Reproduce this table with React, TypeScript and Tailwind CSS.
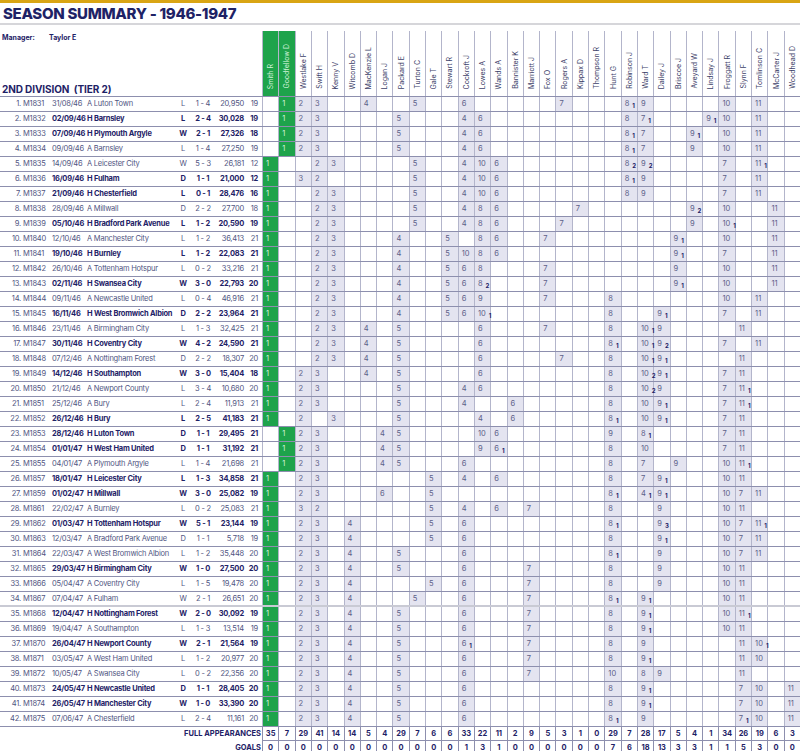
import React from 'react';

const PLAYERS = [
  'Smith R', 'Goodfellow D', 'Westlake F', 'Swift H', 'Kenny V', 'Witcomb D', 'MacKenzie L', 'Logan J',
  'Packard E', 'Turton C', 'Gale T', 'Stewart R', 'Cockroft J', 'Lowes A', 'Wands A', 'Bannister K',
  'Marriott J', 'Fox O', 'Rogers A', 'Kippax D', 'Thompson R', 'Hunt G', 'Robinson J', 'Ward T',
  'Dailey J', 'Briscoe J', 'Aveyard W', 'Lindsay J', 'Froggatt R', 'Slynn F', 'Tomlinson C', 'McCarter J',
  'Woodhead D',
];

const APPS = [35, 7, 29, 41, 14, 14, 5, 4, 29, 7, 6, 6, 33, 22, 11, 2, 9, 5, 3, 1, 0, 29, 7, 28, 17, 5, 4, 1, 34, 26, 19, 6, 3];
const GOALS = [0, 0, 0, 0, 0, 0, 0, 0, 0, 0, 0, 0, 1, 3, 1, 0, 0, 0, 0, 0, 0, 7, 6, 18, 13, 3, 3, 1, 1, 5, 3, 0, 0];

type Match = {
  id: string;
  date: string;
  venue: 'H' | 'A';
  opp: string;
  res: string;
  score: string;
  att: string;
  pos: number;
  cells: string; // "col:shirt.goals"
};

const MATCHES: Match[] = [
  { id: 'M1831', date: '31/08/46', venue: 'A', opp: 'Luton Town', res: 'L', score: '1 - 4', att: '20,950', pos: 19, cells: '1:1 2:2 3:3 6:4 9:5 12:6 18:7 22:8.1 23:9 28:10 30:11' },
  { id: 'M1832', date: '02/09/46', venue: 'H', opp: 'Barnsley', res: 'L', score: '2 - 4', att: '30,028', pos: 19, cells: '1:1 2:2 3:3 8:5 12:4 13:6 22:8 23:7.1 27:9.1 28:10 30:11' },
  { id: 'M1833', date: '07/09/46', venue: 'H', opp: 'Plymouth Argyle', res: 'W', score: '2 - 1', att: '27,326', pos: 18, cells: '1:1 2:2 3:3 8:5 12:4 13:6 22:8.1 23:7 26:9.1 28:10 30:11' },
  { id: 'M1834', date: '09/09/46', venue: 'A', opp: 'Barnsley', res: 'L', score: '1 - 4', att: '27,250', pos: 19, cells: '1:1 2:2 3:3 8:5 12:4 13:6 22:8.1 23:7 26:9 28:10 30:11' },
  { id: 'M1835', date: '14/09/46', venue: 'A', opp: 'Leicester City', res: 'W', score: '5 - 3', att: '26,181', pos: 12, cells: '0:1 3:2 4:3 9:5 12:4 13:10 14:6 22:8.2 23:9.2 28:7 30:11.1' },
  { id: 'M1836', date: '16/09/46', venue: 'H', opp: 'Fulham', res: 'D', score: '1 - 1', att: '21,000', pos: 12, cells: '0:1 2:3 3:2 9:5 12:4 13:10 14:6 22:8.1 23:9 28:7 30:11' },
  { id: 'M1837', date: '21/09/46', venue: 'H', opp: 'Chesterfield', res: 'L', score: '0 - 1', att: '28,476', pos: 16, cells: '0:1 3:2 4:3 9:5 12:4 13:10 14:6 22:8 23:9 28:7 30:11' },
  { id: 'M1838', date: '28/09/46', venue: 'A', opp: 'Millwall', res: 'D', score: '2 - 2', att: '27,700', pos: 18, cells: '0:1 3:2 4:3 9:5 12:4 13:8 14:6 19:7 26:9.2 28:10 31:11' },
  { id: 'M1839', date: '05/10/46', venue: 'H', opp: 'Bradford Park Avenue', res: 'L', score: '1 - 2', att: '20,590', pos: 19, cells: '0:1 3:2 4:3 9:5 12:4 13:8 14:6 18:7 26:9 28:10.1 31:11' },
  { id: 'M1840', date: '12/10/46', venue: 'A', opp: 'Manchester City', res: 'L', score: '1 - 2', att: '36,413', pos: 21, cells: '0:1 3:2 4:3 8:4 11:5 13:8 14:6 17:7 25:9.1 28:10 31:11' },
  { id: 'M1841', date: '19/10/46', venue: 'H', opp: 'Burnley', res: 'L', score: '1 - 2', att: '22,083', pos: 21, cells: '0:1 3:2 4:3 8:4 11:5 12:10 13:8 14:6 25:9.1 28:7 31:11' },
  { id: 'M1842', date: '26/10/46', venue: 'A', opp: 'Tottenham Hotspur', res: 'L', score: '0 - 2', att: '33,216', pos: 21, cells: '0:1 3:2 4:3 8:4 11:5 12:6 13:8 17:7 25:9 28:10 31:11' },
  { id: 'M1843', date: '02/11/46', venue: 'H', opp: 'Swansea City', res: 'W', score: '3 - 0', att: '22,793', pos: 20, cells: '0:1 3:2 4:3 8:4 11:5 12:6 13:8.2 17:7 25:9.1 28:10 31:11' },
  { id: 'M1844', date: '09/11/46', venue: 'A', opp: 'Newcastle United', res: 'L', score: '0 - 4', att: '46,916', pos: 21, cells: '0:1 3:2 4:3 8:4 11:5 12:6 13:9 17:7 21:8 28:10 30:11' },
  { id: 'M1845', date: '16/11/46', venue: 'H', opp: 'West Bromwich Albion', res: 'D', score: '2 - 2', att: '23,964', pos: 21, cells: '0:1 3:2 4:3 8:4 11:5 12:6 13:10.1 21:8 24:9.1 28:7 30:11' },
  { id: 'M1846', date: '23/11/46', venue: 'A', opp: 'Birmingham City', res: 'L', score: '1 - 3', att: '32,425', pos: 21, cells: '0:1 3:2 4:3 6:4 8:5 13:6 17:7 21:8 23:10.1 24:9 29:11' },
  { id: 'M1847', date: '30/11/46', venue: 'H', opp: 'Coventry City', res: 'W', score: '4 - 2', att: '24,590', pos: 21, cells: '0:1 3:2 4:3 6:4 8:5 13:6 21:8.1 23:10.1 24:9.2 28:7 30:11' },
  { id: 'M1848', date: '07/12/46', venue: 'A', opp: 'Nottingham Forest', res: 'D', score: '2 - 2', att: '18,307', pos: 20, cells: '0:1 3:2 4:3 6:4 8:5 13:6 18:7 21:8 23:10.1 24:9.1 29:11' },
  { id: 'M1849', date: '14/12/46', venue: 'H', opp: 'Southampton', res: 'W', score: '3 - 0', att: '15,404', pos: 18, cells: '0:1 2:2 3:3 6:4 8:5 13:6 21:8 23:10.2 24:9.1 28:7 29:11' },
  { id: 'M1850', date: '21/12/46', venue: 'A', opp: 'Newport County', res: 'L', score: '3 - 4', att: '10,680', pos: 20, cells: '0:1 2:2 3:3 8:5 12:4 13:6 21:8 23:10.2 24:9 28:7 29:11.1' },
  { id: 'M1851', date: '25/12/46', venue: 'A', opp: 'Bury', res: 'L', score: '2 - 4', att: '11,913', pos: 21, cells: '0:1 2:2 3:3 8:5 12:4 15:6 21:8 23:10 24:9.1 28:7 29:11.1' },
  { id: 'M1852', date: '26/12/46', venue: 'H', opp: 'Bury', res: 'L', score: '2 - 5', att: '41,183', pos: 21, cells: '0:1 2:2 4:3 8:5 13:4 15:6 21:8.1 23:10 24:9.1 28:7 29:11' },
  { id: 'M1853', date: '28/12/46', venue: 'H', opp: 'Luton Town', res: 'D', score: '1 - 1', att: '29,495', pos: 21, cells: '1:1 2:2 3:3 7:4 8:5 13:10 14:6 21:9 23:8.1 28:7 29:11' },
  { id: 'M1854', date: '01/01/47', venue: 'H', opp: 'West Ham United', res: 'D', score: '1 - 1', att: '31,192', pos: 21, cells: '1:1 2:2 3:3 7:4 8:5 13:9 14:6.1 21:8 23:10 28:7 29:11' },
  { id: 'M1855', date: '04/01/47', venue: 'A', opp: 'Plymouth Argyle', res: 'L', score: '1 - 4', att: '21,698', pos: 21, cells: '1:1 2:2 3:3 7:4 8:5 12:6 21:8 23:7 25:9 28:10 29:11.1' },
  { id: 'M1857', date: '18/01/47', venue: 'H', opp: 'Leicester City', res: 'L', score: '1 - 3', att: '34,858', pos: 21, cells: '0:1 2:2 3:3 10:5 12:4 14:6 21:8 23:7 24:9.1 28:10 29:11' },
  { id: 'M1859', date: '01/02/47', venue: 'H', opp: 'Millwall', res: 'W', score: '3 - 0', att: '25,082', pos: 19, cells: '0:1 2:2 3:3 7:6 10:5 21:8.1 23:4.1 24:9.1 28:10 29:7 30:11' },
  { id: 'M1861', date: '22/02/47', venue: 'A', opp: 'Burnley', res: 'L', score: '0 - 2', att: '25,083', pos: 21, cells: '0:1 2:3 3:2 10:5 12:4 14:6 16:7 21:8 24:9 28:10 29:11' },
  { id: 'M1862', date: '01/03/47', venue: 'H', opp: 'Tottenham Hotspur', res: 'W', score: '5 - 1', att: '23,144', pos: 19, cells: '0:1 2:2 3:3 5:4 10:5 12:6 21:8.1 24:9.3 28:10 29:7 30:11.1' },
  { id: 'M1863', date: '12/03/47', venue: 'A', opp: 'Bradford Park Avenue', res: 'D', score: '1 - 1', att: '5,718', pos: 19, cells: '0:1 2:2 3:3 5:4 10:5 12:6 21:8 24:9.1 28:10 29:7 30:11' },
  { id: 'M1864', date: '22/03/47', venue: 'A', opp: 'West Bromwich Albion', res: 'L', score: '1 - 2', att: '35,448', pos: 20, cells: '0:1 2:2 3:3 5:4 8:5 12:6 21:8.1 24:9 28:10 29:7 30:11' },
  { id: 'M1865', date: '29/03/47', venue: 'H', opp: 'Birmingham City', res: 'W', score: '1 - 0', att: '27,500', pos: 20, cells: '0:1 2:2 3:3 5:4 8:5 12:6 16:7 21:8 24:9 28:10 29:11' },
  { id: 'M1866', date: '05/04/47', venue: 'A', opp: 'Coventry City', res: 'L', score: '1 - 5', att: '19,478', pos: 20, cells: '0:1 2:2 3:3 5:4 10:5 12:6 16:7 21:8 24:9 28:10 29:11' },
  { id: 'M1867', date: '07/04/47', venue: 'A', opp: 'Fulham', res: 'W', score: '2 - 1', att: '26,651', pos: 20, cells: '0:1 2:2 3:3 5:4 9:5 12:6 16:7 21:8.1 23:9.1 28:10 29:11' },
  { id: 'M1868', date: '12/04/47', venue: 'H', opp: 'Nottingham Forest', res: 'W', score: '2 - 0', att: '30,092', pos: 19, cells: '0:1 2:2 3:3 5:4 8:5 12:6 16:7 21:8 23:9.1 28:10 29:11.1' },
  { id: 'M1869', date: '19/04/47', venue: 'A', opp: 'Southampton', res: 'L', score: '1 - 3', att: '13,514', pos: 19, cells: '0:1 2:2 3:3 5:4 8:5 12:6 16:7 21:8 23:9.1 28:10 29:11' },
  { id: 'M1870', date: '26/04/47', venue: 'H', opp: 'Newport County', res: 'W', score: '2 - 1', att: '21,564', pos: 19, cells: '0:1 2:2 3:3 5:4 8:5 12:6.1 16:7 21:8 23:9 29:11 30:10.1' },
  { id: 'M1871', date: '03/05/47', venue: 'A', opp: 'West Ham United', res: 'L', score: '1 - 2', att: '20,977', pos: 20, cells: '0:1 2:2 3:3 5:4 8:5 12:6 16:7 21:8 23:9.1 29:11 30:10' },
  { id: 'M1872', date: '10/05/47', venue: 'A', opp: 'Swansea City', res: 'L', score: '0 - 2', att: '22,356', pos: 20, cells: '0:1 2:2 3:3 5:4 8:5 12:6 16:7 21:10 23:8 24:9 29:11' },
  { id: 'M1873', date: '24/05/47', venue: 'H', opp: 'Newcastle United', res: 'D', score: '1 - 1', att: '28,405', pos: 20, cells: '0:1 2:2 3:3 5:4 8:5 12:6 21:8 23:9.1 29:7 30:10 32:11' },
  { id: 'M1874', date: '26/05/47', venue: 'H', opp: 'Manchester City', res: 'W', score: '1 - 0', att: '33,390', pos: 20, cells: '0:1 2:2 3:3 5:4 8:5 12:6 21:8 23:9.1 29:7 30:10 32:11' },
  { id: 'M1875', date: '07/06/47', venue: 'A', opp: 'Chesterfield', res: 'L', score: '2 - 4', att: '11,161', pos: 20, cells: '0:1 2:2 3:3 5:4 8:5 12:6 21:8.1 23:9 29:7.1 30:10 32:11' },
];

const parseCells = (s: string) => {
  const map: Record<number, { n: string; g?: string }> = {};
  s.split(' ').forEach(t => {
    const [c, v] = t.split(':');
    const [n, g] = v.split('.');
    map[Number(c)] = { n, g };
  });
  return map;
};

const MatchRow: React.FC<{ m: Match; idx: number }> = ({ m, idx }) => {
  const bold = m.venue === 'H';
  const cells = parseCells(m.cells);
  return (
    <div
      className={`grid grid-cols-[262px_repeat(33,minmax(0,1fr))] h-[15px] ${
        idx === 33 ? 'border-b-2 border-[#c9cad4]' : 'border-b border-[#8d8fae]'
      }`}
    >
      <div className={`flex items-center text-[7.5px] leading-none whitespace-nowrap tracking-[-0.03em] ${bold ? 'font-bold text-[#1e2266]' : 'text-[#50557f]'}`}>
        <span className="w-[21px] text-right font-normal text-[#50557f]">{idx + 1}.</span>
        <span className="w-[31px] pl-[2px] font-normal text-[#50557f]">{m.id}</span>
        <span className="w-[35px]">{m.date}</span>
        <span className="w-[89px]">{m.venue} {m.opp}</span>
        <span className="w-[14px] text-center">{m.res}</span>
        <span className="w-[26px] text-center">{m.score}</span>
        <span className="w-[28px] text-right">{m.att}</span>
        <span className="w-[14px] text-right">{m.pos}</span>
      </div>
      {PLAYERS.map((_, c) => {
        const cell = cells[c];
        const green = c < 2 && !!cell;
        return (
          <div
            key={c}
            className={`border-l border-[#b3b5cb] flex items-center pl-[3px] text-[7.5px] leading-none ${
              green ? 'bg-[#1ea34b] text-[#d2f2da]' : cell ? 'bg-[#e4e4f0] text-[#5c6088]' : ''
            }`}
          >
            {cell && (
              <>
                <span>{cell.n}</span>
                {cell.g && <span className="relative top-[2px] ml-[3px] text-[6px] font-bold text-[#1e2266]">{cell.g}</span>}
              </>
            )}
          </div>
        );
      })}
    </div>
  );
};

const TotalsRow: React.FC<{ label: string; values: number[] }> = ({ label, values }) => (
  <div className="grid grid-cols-[262px_repeat(33,minmax(0,1fr))] h-[14px]">
    <div className="flex items-center justify-end pr-[1px] text-[7.5px] font-bold text-[#1e2266] leading-none">{label}</div>
    {values.map((v, i) => (
      <div
        key={i}
        className="border-l border-b border-[#8d8fae] flex items-center justify-center text-[7.5px] font-bold text-[#1e2266] leading-none"
      >
        {v}
      </div>
    ))}
  </div>
);

export default function App() {
  return (
    <div className="w-[800px] h-[751px] overflow-hidden bg-white font-['Inter',sans-serif]">
      {/* Title */}
      <div className="h-[3px] bg-[#d9a514]" />
      <div className="h-[20px] pl-[3px] flex items-center text-[15px] font-extrabold tracking-[-0.02em] text-[#1e2266] leading-none">
        SEASON SUMMARY - 1946-1947
      </div>
      <div className="h-[2px] bg-[#d6d6da]" />

      {/* Column headers */}
      <div className="grid grid-cols-[262px_repeat(33,minmax(0,1fr))] h-[66px] mt-[6px] border-b border-[#8d8fae]">
        <div className="flex flex-col justify-between pl-[2px]">
          <div className="flex pt-[3px] text-[7px] font-bold text-[#1e2266] leading-none">
            <span className="w-[47px]">Manager:</span>
            <span>Taylor E</span>
          </div>
          <div className="pb-[2px] text-[10px] font-bold text-[#1e2266] leading-none whitespace-pre tracking-[-0.01em]">
            2ND DIVISION  (TIER 2)
          </div>
        </div>
        {PLAYERS.map((p, c) => (
          <div
            key={p}
            className={`border-l border-[#b3b5cb] flex justify-center items-end pb-[7px] ${
              c < 2 ? 'bg-[#1ea34b] text-[#d2f2da]' : 'text-[#3d4169]'
            }`}
          >
            <span className="[writing-mode:vertical-rl] rotate-180 text-[7px] leading-none whitespace-nowrap">{p}</span>
          </div>
        ))}
      </div>

      {MATCHES.map((m, i) => (
        <MatchRow key={m.id} m={m} idx={i} />
      ))}

      <TotalsRow label="FULL APPEARANCES" values={APPS} />
      <TotalsRow label="GOALS" values={GOALS} />
    </div>
  );
}
